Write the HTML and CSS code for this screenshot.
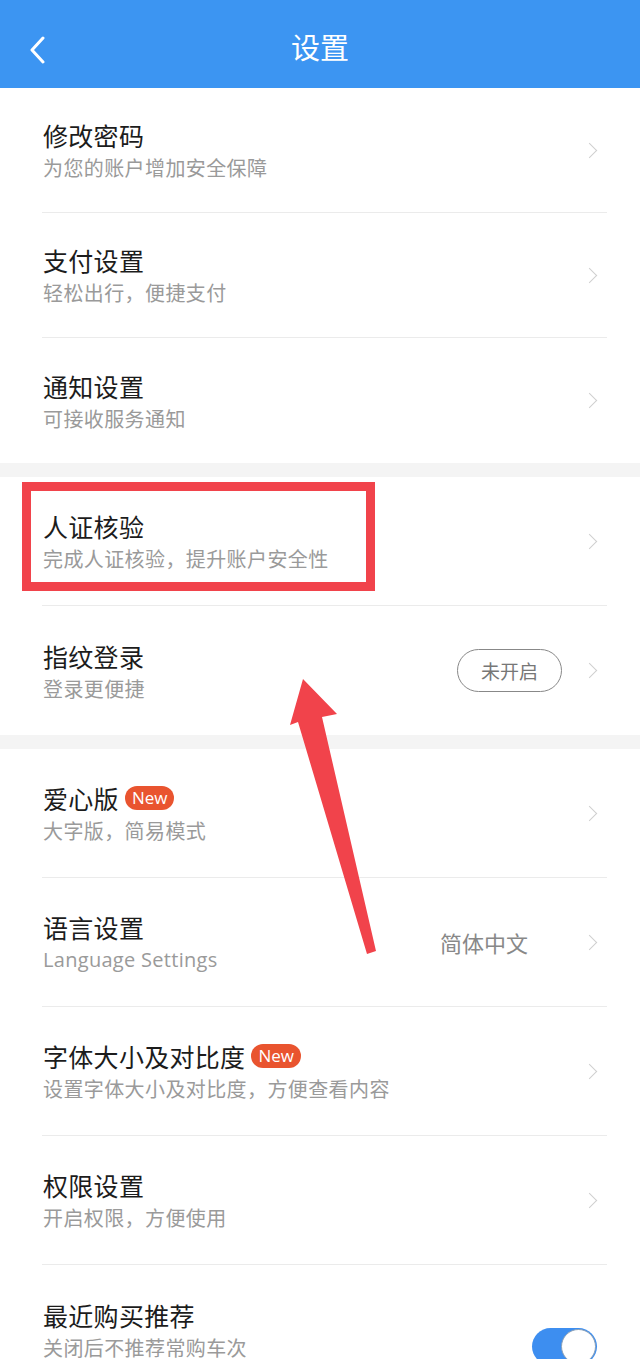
FILE: index.html
```html
<!DOCTYPE html>
<html lang="zh-CN">
  <head>
    <meta charset="UTF-8" />
    <meta name="viewport" content="width=device-width, initial-scale=1.0" />
    <title>设置</title>
    <link rel="stylesheet" href="styles.css">
  </head>

  <body>
    <div class="Page">
      <header class="topBar">
        <svg class="back" viewBox="0 0 18 28" width="18" height="28">
          <path d="M15 2 L4 14 L15 26" fill="none" stroke="#fff" stroke-width="3" stroke-linecap="round" stroke-linejoin="round" />
        </svg>
        <h1>设置</h1>
      </header>

      <!-- account -->
      <div class="group tight">
        <div class="row">
          <div class="text">
            <p class="title">修改密码</p>
            <p class="sub">为您的账户增加安全保障</p>
          </div>
          <span class="arrow"></span>
        </div>
        <div class="row">
          <div class="text">
            <p class="title">支付设置</p>
            <p class="sub">轻松出行，便捷支付</p>
          </div>
          <span class="arrow"></span>
        </div>
        <div class="row last">
          <div class="text">
            <p class="title">通知设置</p>
            <p class="sub">可接收服务通知</p>
          </div>
          <span class="arrow"></span>
        </div>
      </div>

      <!-- security -->
      <div class="group">
        <div class="row">
          <div class="text">
            <p class="title">人证核验</p>
            <p class="sub">完成人证核验，提升账户安全性</p>
          </div>
          <span class="arrow"></span>
        </div>
        <div class="row last">
          <div class="text">
            <p class="title">指纹登录</p>
            <p class="sub">登录更便捷</p>
          </div>
          <span class="pill">未开启</span>
          <span class="arrow"></span>
        </div>
      </div>

      <!-- display -->
      <div class="group">
        <div class="row">
          <div class="text">
            <p class="title">爱心版<span class="badge">New</span></p>
            <p class="sub">大字版，简易模式</p>
          </div>
          <span class="arrow"></span>
        </div>
        <div class="row">
          <div class="text">
            <p class="title">语言设置</p>
            <p class="sub latin">Language Settings</p>
          </div>
          <span class="value">简体中文</span>
          <span class="arrow"></span>
        </div>
        <div class="row">
          <div class="text">
            <p class="title">字体大小及对比度<span class="badge">New</span></p>
            <p class="sub">设置字体大小及对比度，方便查看内容</p>
          </div>
          <span class="arrow"></span>
        </div>
        <div class="row">
          <div class="text">
            <p class="title">权限设置</p>
            <p class="sub">开启权限，方便使用</p>
          </div>
          <span class="arrow"></span>
        </div>
        <div class="row last">
          <div class="text">
            <p class="title">最近购买推荐</p>
            <p class="sub">关闭后不推荐常购车次</p>
          </div>
          <span class="toggle on"><span class="knob"></span></span>
        </div>
      </div>

      <!-- annotation drawn on top of the screenshot -->
      <div class="markBox"></div>
      <svg class="markArrow" viewBox="0 0 640 1359" width="640" height="1359">
        <polygon points="303,679 337,714 322,717 376,951 367,954 298,722 290,725" fill="#f1434b" />
      </svg>
    </div>
  </body>
</html>
```

FILE: styles.css
```css
* {
  box-sizing: border-box;
}

body {
  margin: 0;
  background-color: #fff;
  font-family: "Noto Sans CJK SC", "Noto Sans", sans-serif;
}

.Page {
  position: relative;
  width: 640px;
  height: 1359px;
  overflow: hidden;
  background-color: #f4f4f4;
}

.topBar {
  height: 88px;
  background-color: #3c95f2;
  display: flex;
  align-items: center;
  justify-content: center;
  position: relative;
}

.topBar h1 {
  margin: 3px 0 0;
  color: #fff;
  font-size: 29px;
  font-weight: 400;
}

.topBar .back {
  position: absolute;
  left: 28px;
  top: 36px;
}

.group {
  background-color: #fff;
  margin-bottom: 14px;
}

.row {
  height: 129px;
  margin: 0 33px 0 42px;
  display: flex;
  align-items: center;
  border-bottom: 1px solid #ebebeb;
}

.group.tight .row {
  height: 125px;
}

.row.last {
  border-bottom: none;
}

.text {
  flex: 1;
  padding-left: 1px;
}

.title {
  margin: 0;
  font-size: 25px;
  line-height: 30px;
  letter-spacing: 0.3px;
  color: #1c1c1c;
  display: flex;
  align-items: center;
}

.sub {
  margin: 5px 0 0;
  font-size: 20px;
  line-height: 25px;
  letter-spacing: 0.4px;
  color: #9a9a9a;
}

.sub.latin {
  font-family: "Open Sans", "Noto Sans", sans-serif;
  letter-spacing: 0.3px;
}

.badge {
  margin-left: 6px;
  height: 24px;
  padding: 0 7px;
  border-radius: 12px;
  background-color: #e9542f;
  color: #fff;
  font-family: "Open Sans", "Noto Sans", sans-serif;
  font-size: 17px;
  line-height: 24px;
  letter-spacing: 0;
}

.arrow {
  width: 11px;
  height: 11px;
  border-top: 1.5px solid #cfcfcf;
  border-right: 1.5px solid #cfcfcf;
  transform: rotate(45deg);
  margin-right: 12px;
}

.pill {
  height: 43px;
  width: 105px;
  border: 1.5px solid #888;
  border-radius: 22px;
  color: #777;
  font-size: 19px;
  display: flex;
  align-items: center;
  justify-content: center;
  margin-right: 22px;
}

.value {
  color: #888;
  font-size: 22px;
  margin-right: 56px;
}

.toggle {
  width: 65px;
  height: 37px;
  border-radius: 19px;
  background-color: #3d8ef0;
  position: relative;
  margin-right: 10px;
  margin-top: 34px;
}

.toggle .knob {
  position: absolute;
  right: 1px;
  top: 1px;
  width: 35px;
  height: 35px;
  border-radius: 50%;
  background-color: #fff;
  border: 1px solid #8aa0b8;
}

/* annotation */
.markBox {
  position: absolute;
  left: 22px;
  top: 482px;
  width: 353px;
  height: 109px;
  border: 9px solid #f1434b;
}

.markArrow {
  position: absolute;
  left: 0;
  top: 0;
}
```
